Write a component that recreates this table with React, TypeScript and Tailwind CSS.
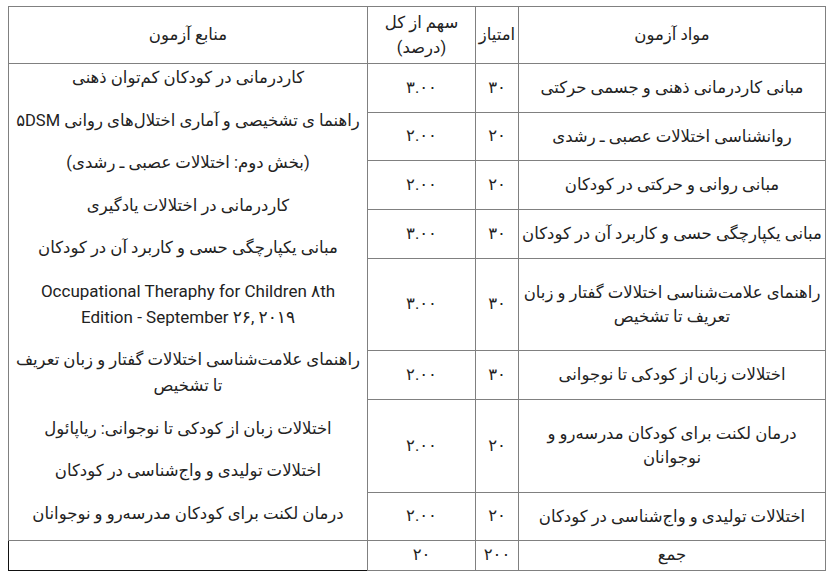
import React from "react";

const rows = [
  { title: ["مبانی کاردرمانی ذهنی و جسمی حرکتی"], score: "۳۰", pct: "۳.۰۰", h: "h-[49px]" },
  { title: ["روانشناسی اختلالات عصبی ـ رشدی"], score: "۲۰", pct: "۲.۰۰", h: "h-[48px]" },
  { title: ["مبانی روانی و حرکتی در کودکان"], score: "۲۰", pct: "۲.۰۰", h: "h-[49px]" },
  { title: ["مبانی یکپارچگی حسی و کاربرد آن در کودکان"], score: "۳۰", pct: "۳.۰۰", h: "h-[49px]" },
  { title: ["راهنمای علامت‌شناسی اختلالات گفتار و زبان", "تعریف تا تشخیص"], score: "۳۰", pct: "۳.۰۰", h: "h-[92px]" },
  { title: ["اختلالات زبان از کودکی تا نوجوانی"], score: "۳۰", pct: "۲.۰۰", h: "h-[49px]" },
  { title: ["درمان لکنت برای کودکان مدرسه‌رو و", "نوجوانان"], score: "۲۰", pct: "۲.۰۰", h: "h-[93px]" },
  { title: ["اختلالات تولیدی و واج‌شناسی در کودکان"], score: "۲۰", pct: "۲.۰۰", h: "h-[48px]" },
];

const sources: { lines: string[]; latin?: boolean }[] = [
  { lines: ["کاردرمانی در کودکان کم‌توان ذهنی"] },
  { lines: ["راهنما ی تشخیصی و آماری اختلال‌های روانی ۵DSM"] },
  { lines: ["(بخش دوم: اختلالات عصبی ـ رشدی)"] },
  { lines: ["کاردرمانی در اختلالات یادگیری"] },
  { lines: ["مبانی یکپارچگی حسی و کاربرد آن در کودکان"] },
  { lines: ["Occupational Theraphy for Children ۸th", "Edition - September ۲۶, ۲۰۱۹"], latin: true },
  { lines: ["راهنمای علامت‌شناسی اختلالات گفتار و زبان تعریف", "تا تشخیص"] },
  { lines: ["اختلالات زبان از کودکی تا نوجوانی: ریاپائول"] },
  { lines: ["اختلالات تولیدی و واج‌شناسی در کودکان"] },
  { lines: ["درمان لکنت برای کودکان مدرسه‌رو و نوجوانان"] },
];

export default function App() {
  return (
    <div
      className="w-[830px] h-[572px] bg-white pt-[6px] pl-[8px] text-[#222] text-[16.5px]"
      style={{ fontFamily: "Roboto, 'DejaVu Sans', sans-serif" }}
    >
      <table dir="rtl" className="w-[817px] border-collapse table-fixed">
        <colgroup>
          <col className="w-[307px]" />
          <col className="w-[43px]" />
          <col className="w-[108px]" />
          <col className="w-[359px]" />
        </colgroup>
        <thead>
          <tr className="h-[57px]">
            <th className="border border-[#808080] font-normal text-center align-middle">مواد آزمون</th>
            <th className="border border-[#808080] font-normal text-center align-middle px-0">امتیاز</th>
            <th className="border border-[#808080] font-normal text-center align-middle leading-[25px]">
              سهم از کل
              <br />
              (درصد)
            </th>
            <th className="border border-[#808080] font-normal text-center align-middle">منابع آزمون</th>
          </tr>
        </thead>
        <tbody>
          {rows.map((r, i) => (
            <tr key={i} className={r.h}>
              <td className="border border-[#808080] text-center align-middle leading-[24px] px-0">
                {r.title.map((t, j) => (
                  <div key={j} className="whitespace-nowrap">{t}</div>
                ))}
              </td>
              <td className="border border-[#808080] text-center align-middle">{r.score}</td>
              <td className="border border-[#808080] text-center align-middle">{r.pct}</td>
              {i === 0 && (
                <td rowSpan={8} className="border border-[#808080] text-center align-top pt-[1px] px-0">
                  <div className="flex flex-col gap-[16px]">
                    {sources.map((s, k) => (
                      <div
                        key={k}
                        className={s.latin ? "leading-[26.5px] text-[17px]" : "leading-[26.5px]"}
                      >
                        {s.lines.map((l, m) => (
                          <div key={m} className="whitespace-nowrap">{l}</div>
                        ))}
                      </div>
                    ))}
                  </div>
                </td>
              )}
            </tr>
          ))}
          <tr className="h-[30px]">
            <td className="border border-[#808080] text-center align-middle">جمع</td>
            <td className="border border-[#808080] text-center align-middle">۲۰۰</td>
            <td className="border border-[#808080] text-center align-middle">۲۰</td>
            <td className="border border-[#808080] border-l-[#111] border-b-[#111]"></td>
          </tr>
        </tbody>
      </table>
    </div>
  );
}
